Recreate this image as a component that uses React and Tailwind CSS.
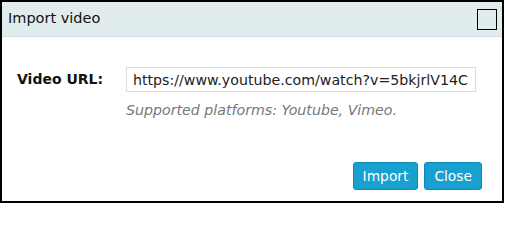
export default function App() {
  return (
    <div className="w-[505px] h-[204px] bg-white" style={{ fontFamily: '"DejaVu Sans", Verdana, sans-serif' }}>
      <div className="w-[504px] h-[203px] border-2 border-black flex flex-col bg-white">
        <div className="h-[35px] bg-[#e1ecee] border-b border-[#d3dcde] flex items-center justify-between pl-[6px] pr-[5px]">
          <span className="text-[14.5px] text-[#111]">Import video</span>
          <button className="w-[20px] h-[21px] border border-black bg-[#e1ecee]"></button>
        </div>
        <div className="pt-[30px] pl-[15px]">
          <div className="flex items-center">
            <label className="w-[109px] text-[14px] font-bold text-[#111]">Video URL:</label>
            <input
              className="w-[350px] h-[25px] border border-[#dcdcdc] px-[6px] text-[14.2px] text-[#222] outline-none"
              defaultValue="https://www.youtube.com/watch?v=5bkjrlV14C"
              style={{ fontFamily: '"DejaVu Sans", Verdana, sans-serif' }}
            />
          </div>
          <p className="ml-[109px] mt-[8px] text-[14.2px] italic text-[#777]">Supported platforms: Youtube, Vimeo.</p>
        </div>
        <div className="mt-auto mb-[11px] pr-[20px] flex justify-end gap-[6px]">
          <button className="h-[28px] px-[9px] rounded-[3px] border border-[#0f88b6] bg-[#18a0d1] text-white text-[13.8px]">Import</button>
          <button className="h-[28px] px-[9px] rounded-[3px] border border-[#0f88b6] bg-[#18a0d1] text-white text-[13.8px]">Close</button>
        </div>
      </div>
    </div>
  );
}
